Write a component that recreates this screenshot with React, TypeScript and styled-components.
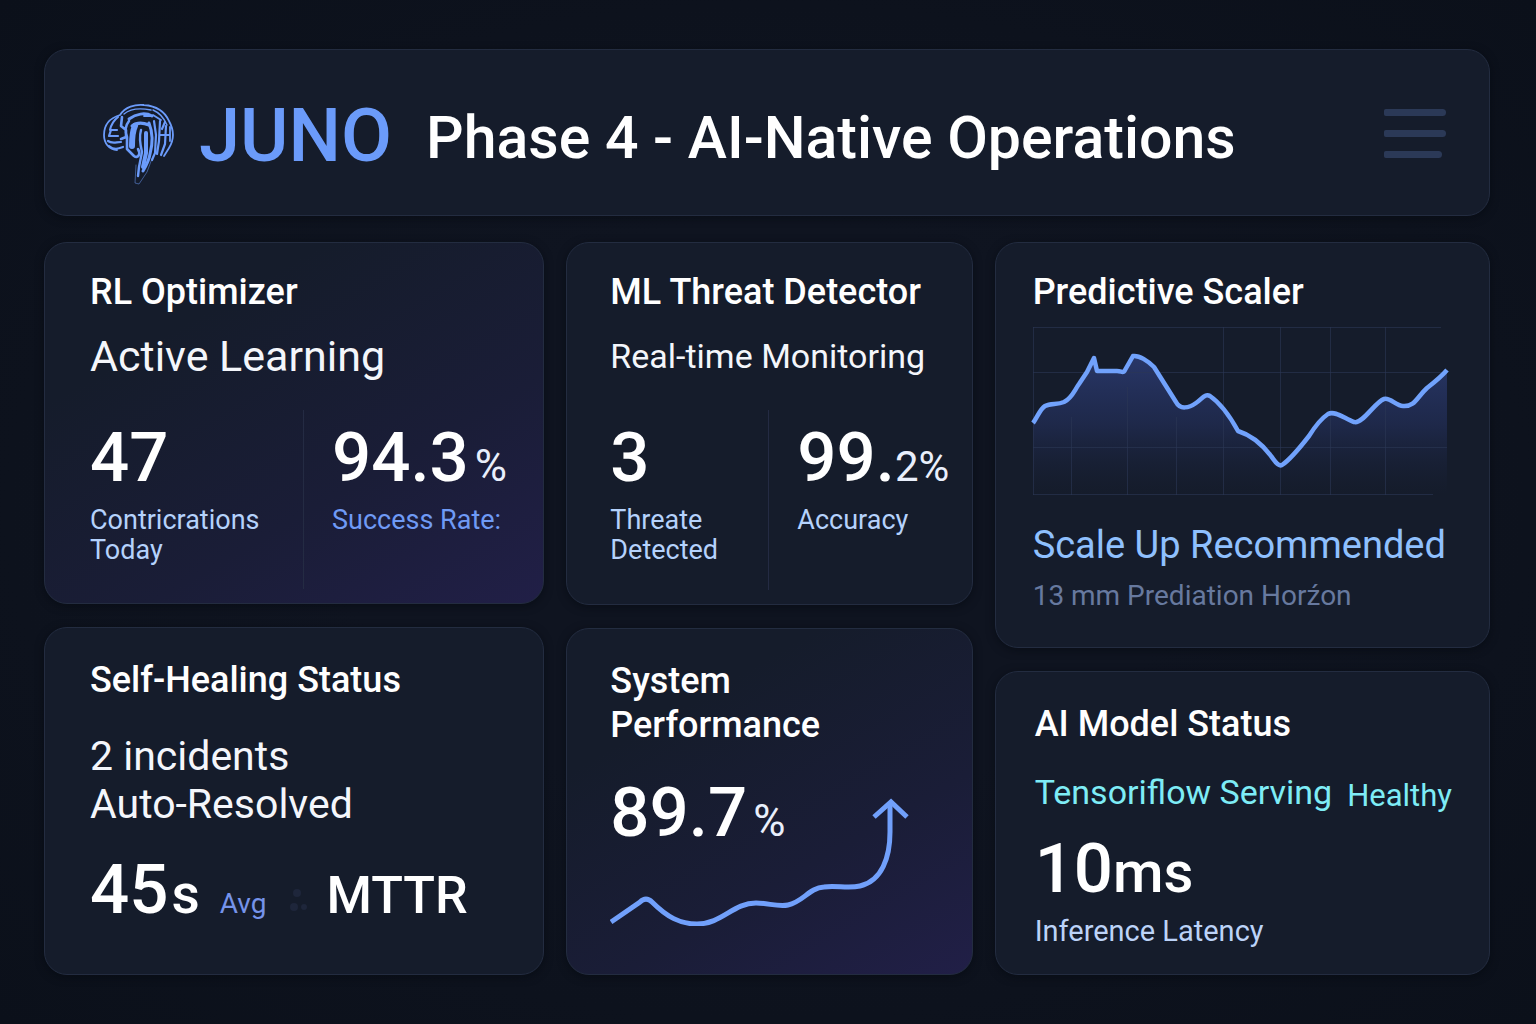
import React from "react";
import styled, { createGlobalStyle, css } from "styled-components";

const Global = createGlobalStyle`
  *, *::before, *::after { box-sizing: border-box; }
  body { margin: 0; background: #0c111b; }
  h1, h2, p, dl, dt, dd { margin: 0; font-weight: 400; }
`;

const Page = styled.div`
  min-height: 100vh;
  display: flex;
  flex-direction: column;
  gap: 26px;
  padding: 49px 46px 49px 44px;
  background: radial-gradient(ellipse at center, #0f1420 40%, #0b101a 100%);
  color: #fff;
  font-family: Roboto, "Liberation Sans", sans-serif;
`;

const surface = css`
  border: 1px solid #232c40;
  border-radius: 23px;
  background: #151c2b;
  box-shadow: 0 2px 8px rgba(4, 7, 14, 0.5);
`;

const Header = styled.header`
  ${surface}
  display: flex;
  align-items: center;
  padding: 22px 43px 22px 55px;
`;

const Brand = styled.div`
  display: flex;
  align-items: center;
  gap: 19px;
  color: #6b9bfa;
`;

const Brain = styled.svg`
  width: 80px;
  height: 96px;
  margin-top: 25px;
`;

const BrandName = styled.span`
  padding-top: 6px;
  font-size: 74px;
  line-height: 96px;
  font-weight: 500;
`;

const PageTitle = styled.h1`
  flex: 1;
  margin-left: 34px;
  padding-top: 10px;
  font-size: 59px;
  line-height: 80px;
  font-weight: 500;
`;

const MenuButton = styled.button`
  display: flex;
  flex-direction: column;
  gap: 14px;
  width: 62px;
  padding: 2px 0 0;
  border: 0;
  background: none;
  cursor: pointer;
`;

const MenuBar = styled.span<{ $short?: boolean }>`
  height: 7px;
  width: ${(p) => (p.$short ? "58px" : "62px")};
  border-radius: 2px 4px 4px 2px;
  background: #2b3957;
`;

const Board = styled.main`
  flex: 1;
  display: grid;
  grid-template-columns: minmax(0, 500fr) minmax(0, 406fr) minmax(0, 495fr);
  gap: 22px;
`;

const Column = styled.div<{ $rows: string }>`
  display: grid;
  grid-template-rows: ${(p) => p.$rows};
  gap: 23px;
  min-width: 0;
`;

const Card = styled.section<{ $glow?: boolean; $inset: number }>`
  ${surface}
  display: flex;
  flex-direction: column;
  min-width: 0;
  padding: 27px 20px 14px ${(p) => p.$inset}px;

  & + & { padding-top: 30px; }

  ${(p) =>
    p.$glow &&
    css`
      background: linear-gradient(150deg, #151c2b 25%, #1a1d37 65%, #211f47 100%);
    `}
`;

const CardTitle = styled.h2`
  font-size: 36px;
  line-height: 44px;
  font-weight: 500;
`;

const Lead = styled.p<{ $size?: number; $gap?: number }>`
  margin-top: ${(p) => p.$gap ?? 18}px;
  font-size: ${(p) => p.$size ?? 43}px;
  line-height: 48px;
  color: #f4f6fb;
`;

const Stats = styled.dl<{ $columns: string }>`
  flex: 1;
  display: grid;
  grid-template-columns: ${(p) => p.$columns};
`;

const Stat = styled.div<{ $divided?: boolean }>`
  display: flex;
  flex-direction: column-reverse;
  justify-content: flex-end;
  margin-top: 30px;
  padding-top: 12px;
  white-space: nowrap;

  ${(p) =>
    p.$divided &&
    css`
      padding-left: 28px;
      border-left: 1px solid #242b43;
    `}
`;

const Figure = styled.dd`
  font-size: 69px;
  line-height: 72px;
  font-weight: 500;
`;

const Unit = styled.span<{ $size?: number; $bold?: boolean; $gap?: number }>`
  margin-left: ${(p) => p.$gap ?? 0}px;
  font-size: ${(p) => p.$size ?? 42}px;
  line-height: 1;
  font-weight: ${(p) => (p.$bold ? 500 : 400)};
  color: ${(p) => (p.$bold ? "#fff" : "#e9effc")};
`;

const Caption = styled.dt<{ $color?: string; $size?: number }>`
  margin-top: 11px;
  font-size: ${(p) => p.$size ?? 27}px;
  line-height: 30px;
  color: ${(p) => p.$color ?? "#b5d2fc"};
`;

const Chart = styled.svg`
  display: block;
  width: 414px;
  max-width: 100%;
  height: auto;
  margin-top: 13px;
  overflow: visible;
`;

const Recommendation = styled.p`
  margin-top: 26px;
  font-size: 38px;
  line-height: 48px;
  color: #8fc0fe;
`;

const Note = styled.p`
  margin-top: 9px;
  font-size: 28px;
  line-height: 36px;
  color: #67799f;
`;

const Recovery = styled.p`
  display: flex;
  align-items: baseline;
  margin-top: 26px;
  font-size: 69px;
  line-height: 72px;
  font-weight: 500;
`;

const Average = styled.span`
  margin-left: 20px;
  font-size: 28px;
  line-height: 1;
  font-weight: 400;
  color: #7593ea;
`;

const Dots = styled.svg`
  width: 20px;
  height: 24px;
  margin: 0 18px 0 22px;
`;

const Metric = styled.span`
  font-size: 52px;
  line-height: 1;
`;

const Performance = styled.div`
  display: grid;
  margin-top: 30px;

  > * { grid-area: 1 / 1; }
`;

const Trend = styled.svg`
  width: 300px;
  height: 128px;
  margin-top: 21px;
`;

const Service = styled.p`
  display: flex;
  gap: 15px;
  margin-top: 22px;
  font-size: 34px;
  line-height: 48px;
  color: #7eecf6;
  white-space: nowrap;
`;

const Health = styled.span`
  align-self: flex-end;
  font-size: 31px;
  line-height: 40px;
`;

const Latency = styled.dl`
  display: flex;
  flex-direction: column-reverse;
  margin: 17px 0 0;
`;

function BrainLogo() {
  return (
    <Brain viewBox="0 0 80 96" fill="none" stroke="#6b9bfa" strokeLinecap="round" strokeLinejoin="round" aria-hidden="true">
      <path d="M17 53C9 53 4 46 4 38c0-10 6-17 16-20C25 10 35 7 44 8c12 1 21 7 25 16 5 9 5 19 0 27l-5 8" strokeWidth="1.8" />
      <path d="M24 17c7-6 17-6 27-4M53 13c7 3 11 8 14 15" strokeWidth="1.4" />
      <path d="M18 20c-5 4-7 8-8 13M17 33h-6l-2 6h9M8 44c4 3 8 1 13 1M9 49c5 4 9 3 14 1" strokeWidth="2.2" />
      <path d="M22 20l-1 9 5 4v7l-5 2M29 24c-4 5-4 11-2 16v12l7 7c4 3 7-2 4-7" strokeWidth="2.6" />
      <path d="M29 22c7-5 16-7 23-3M32 29c5-4 12-3 17-1" strokeWidth="3" />
      <path d="M35 29c-2 4-3 12-3 20" strokeWidth="6" />
      <path d="M41 33c-2 7-1 14 1 22l-3 15-1 9" strokeWidth="2.4" />
      <path d="M49 26c4 10 4 20 1 31-1 7-4 12-7 17" strokeWidth="3" />
      <path d="M46 36v20l-3 14" strokeWidth="4" />
      <path d="M54 24l2 14-1 18-3 7M60 24l-1 20-2 13M62 32l3-7M66 29l-1 18-4 11" strokeWidth="2.2" />
      <path d="M60 38h9M70 30v14M53 18l8 5M44 19h7" strokeWidth="1.8" />
      <path d="M36 68l-1 18 4 1 8-12 6-16" strokeWidth="1" opacity="0.5" />
    </Brain>
  );
}

const LOAD =
  "M0 96C4 91 7 82 12 79C18 76 24 78 31 75C39 71 41 64 46 57L54 45L61 31L64 44H84C89 44 90 47 92 43L100 29C106 28 115 34 121 40L143 75C147 83 156 81 163 76C169 72 172 66 177 69C190 78 199 93 205 104C221 109 232 121 238 129C242 134 245 140 249 138C258 132 269 118 276 109C281 101 289 91 295 87C302 83 312 92 321 95C329 98 342 75 351 72C357 70 363 79 370 79C382 80 384 70 394 61C403 54 409 49 414 43";

function LoadChart() {
  return (
    <Chart viewBox="0 0 414 168" role="img" aria-label="Predicted load">
      <defs>
        <linearGradient id="load-fill" x1="0" y1="0" x2="0" y2="1">
          <stop offset="0" stopColor="#2b3a70" stopOpacity="0.9" />
          <stop offset="0.5" stopColor="#232f5a" stopOpacity="0.65" />
          <stop offset="1" stopColor="#1b2440" stopOpacity="0" />
        </linearGradient>
      </defs>
      <path d={`${LOAD}V167H0Z`} fill="url(#load-fill)" />
      <path d="M0 .5H408M0 45.5H414M0 120.5H414M0 167.5H400M.5 0V168M190.5 0V168M247.5 0V168M297.5 0V168M352.5 0V168M38.5 90V168M94.5 60V168M143.5 90V168" stroke="#2c3755" strokeOpacity="0.6" fill="none" />
      <path d={LOAD} fill="none" stroke="#71a2fc" strokeWidth="4.5" strokeLinejoin="round" />
    </Chart>
  );
}

export default function App() {
  return (
    <>
      <Global />
      <Page>
        <Header>
          <Brand>
            <BrainLogo />
            <BrandName>JUNO</BrandName>
          </Brand>
          <PageTitle>Phase 4 - AI-Native Operations</PageTitle>
          <MenuButton type="button" aria-label="Open menu">
            <MenuBar />
            <MenuBar />
            <MenuBar $short />
          </MenuButton>
        </Header>
        <Board>
          <Column $rows="362fr 348fr">
            <Card $glow $inset={45}>
              <CardTitle>RL Optimizer</CardTitle>
              <Lead>Active Learning</Lead>
              <Stats $columns="213px 1fr">
                <Stat>
                  <Caption>Contricrations<br />Today</Caption>
                  <Figure>47</Figure>
                </Stat>
                <Stat $divided>
                  <Caption $color="#6f9af5">Success Rate:</Caption>
                  <Figure>94.3<Unit $gap={6} $size={44}>%</Unit></Figure>
                </Stat>
              </Stats>
            </Card>
            <Card $inset={45}>
              <CardTitle>Self-Healing Status</CardTitle>
              <Lead $size={41} $gap={30}>2 incidents<br />Auto-Resolved</Lead>
              <Recovery>
                45<Unit $size={55} $bold $gap={3}>s</Unit>
                <Average>Avg</Average>
                <Dots viewBox="0 0 20 24" fill="#1e263b" aria-hidden="true">
                  <circle cx="9" cy="4" r="4" />
                  <circle cx="6" cy="18" r="4" />
                  <circle cx="16" cy="18" r="3" />
                </Dots>
                <Metric>MTTR</Metric>
              </Recovery>
            </Card>
          </Column>
          <Column $rows="363fr 347fr">
            <Card $inset={43}>
              <CardTitle>ML Threat Detector</CardTitle>
              <Lead $size={34}>Real-time Monitoring</Lead>
              <Stats $columns="158px 1fr">
                <Stat>
                  <Caption>Threate<br />Detected</Caption>
                  <Figure>3</Figure>
                </Stat>
                <Stat $divided>
                  <Caption>Accuracy</Caption>
                  <Figure>99.<Unit>2%</Unit></Figure>
                </Stat>
              </Stats>
            </Card>
            <Card $glow $inset={43}>
              <CardTitle>System<br />Performance</CardTitle>
              <Performance>
                <Figure as="p">89.7<Unit $gap={6} $size={44}>%</Unit></Figure>
                <Trend viewBox="0 0 300 128" fill="none" stroke="#71a0fb" strokeWidth="5" role="img" aria-label="Performance rising">
                  <path d="M1 124L30 104Q36 98 42 104C57 119 70 126 87 126C112 126 123 105 146 105C158 105 168 109 178 107C193 104 199 90 214 89C226 87 238 91 250 88C272 83 280 59 280 34V5" />
                  <path d="M264 19L281 4L297 19" />
                </Trend>
              </Performance>
            </Card>
          </Column>
          <Column $rows="407fr 305fr">
            <Card $inset={37}>
              <CardTitle>Predictive Scaler</CardTitle>
              <LoadChart />
              <Recommendation>Scale Up Recommended</Recommendation>
              <Note>13 mm Prediation Horźon</Note>
            </Card>
            <Card $inset={39}>
              <CardTitle>AI Model Status</CardTitle>
              <Service>
                Tensoriflow Serving <Health>Healthy</Health>
              </Service>
              <Latency>
                <Caption $size={29} $color="#bcd3f8">Inference Latency</Caption>
                <Figure>10<Unit $size={58} $bold>ms</Unit></Figure>
              </Latency>
            </Card>
          </Column>
        </Board>
      </Page>
    </>
  );
}
